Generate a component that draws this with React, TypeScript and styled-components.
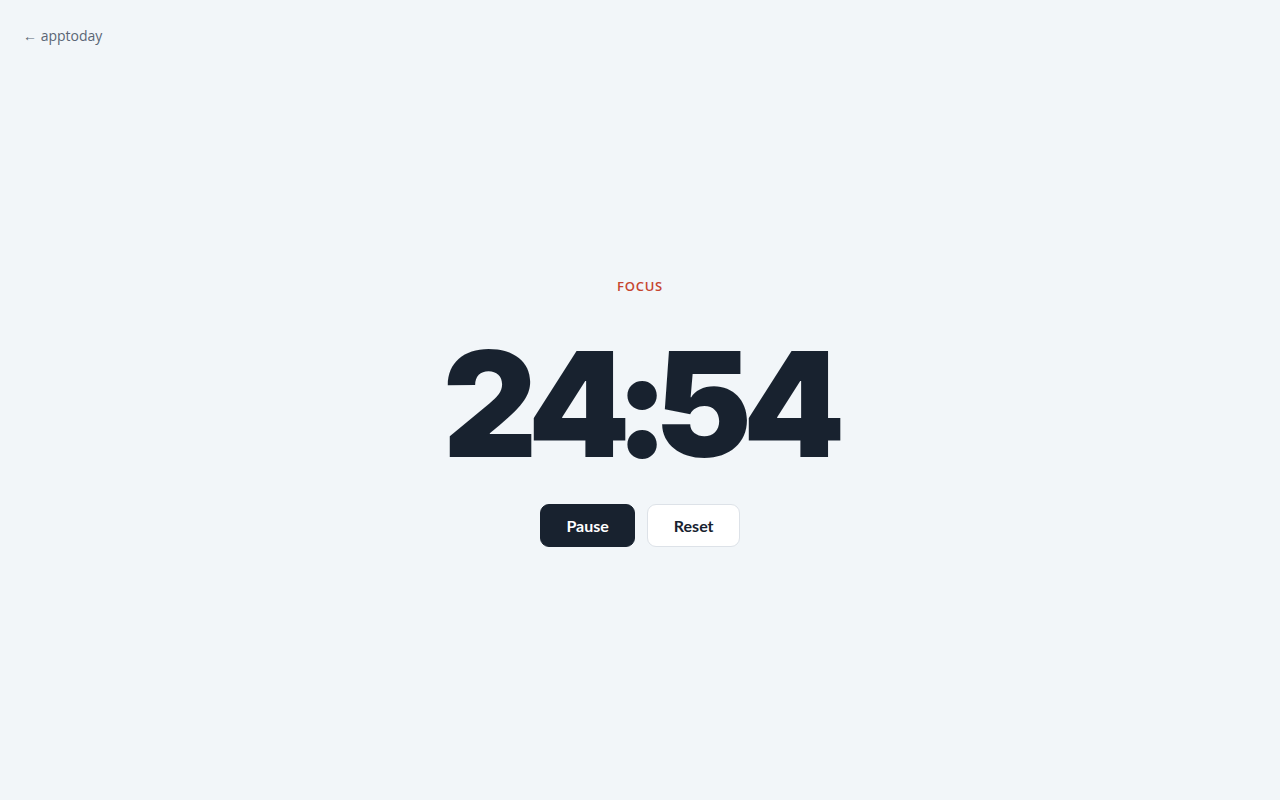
import styled, { createGlobalStyle } from "styled-components";

const GlobalStyle = createGlobalStyle`
  html, body {
    margin: 0;
    padding: 0;
    background: #f2f6f9;
  }
  * {
    box-sizing: border-box;
  }
`;

const Page = styled.div`
  min-height: 100vh;
  display: flex;
  flex-direction: column;
`;

const Header = styled.header`
  padding: 26px 23px 0;
  height: 56px;
`;

const BackLink = styled.a`
  font-family: "Open Sans", "Noto Sans", sans-serif;
  font-size: 14px;
  color: #5b6675;
  text-decoration: none;
  cursor: pointer;
`;

const Main = styled.main`
  flex: 1;
  display: flex;
  flex-direction: column;
  align-items: center;
  justify-content: center;
  padding-bottom: 32px;
`;

const Mode = styled.div`
  font-family: "Open Sans", "Noto Sans", sans-serif;
  font-size: 13px;
  font-weight: 600;
  letter-spacing: 0.06em;
  color: #c6452f;
  text-transform: uppercase;
`;

const Time = styled.div`
  font-family: Inter, "Liberation Sans", sans-serif;
  font-weight: 900;
  font-size: 146px;
  line-height: 1;
  letter-spacing: -0.028em;
  color: #18222f;
  margin-top: 36px;
  font-variant-numeric: tabular-nums;
`;

const Controls = styled.div`
  display: flex;
  gap: 12px;
  margin-top: 27px;
`;

const Button = styled.button<{ $primary?: boolean }>`
  font-family: Lato, "Open Sans", sans-serif;
  font-weight: 700;
  font-size: 16px;
  height: 43px;
  padding: 0 25.5px;
  border-radius: 9px;
  cursor: pointer;
  border: 1px solid ${(p) => (p.$primary ? "#18222f" : "#dde2e8")};
  background: ${(p) => (p.$primary ? "#18222f" : "#ffffff")};
  color: ${(p) => (p.$primary ? "#ffffff" : "#18222f")};
`;

function App() {
  return (
    <Page>
      <GlobalStyle />
      <Header>
        <BackLink>← apptoday</BackLink>
      </Header>
      <Main>
        <Mode>Focus</Mode>
        <Time>24:54</Time>
        <Controls>
          <Button $primary>Pause</Button>
          <Button>Reset</Button>
        </Controls>
      </Main>
    </Page>
  );
}

export default App;
